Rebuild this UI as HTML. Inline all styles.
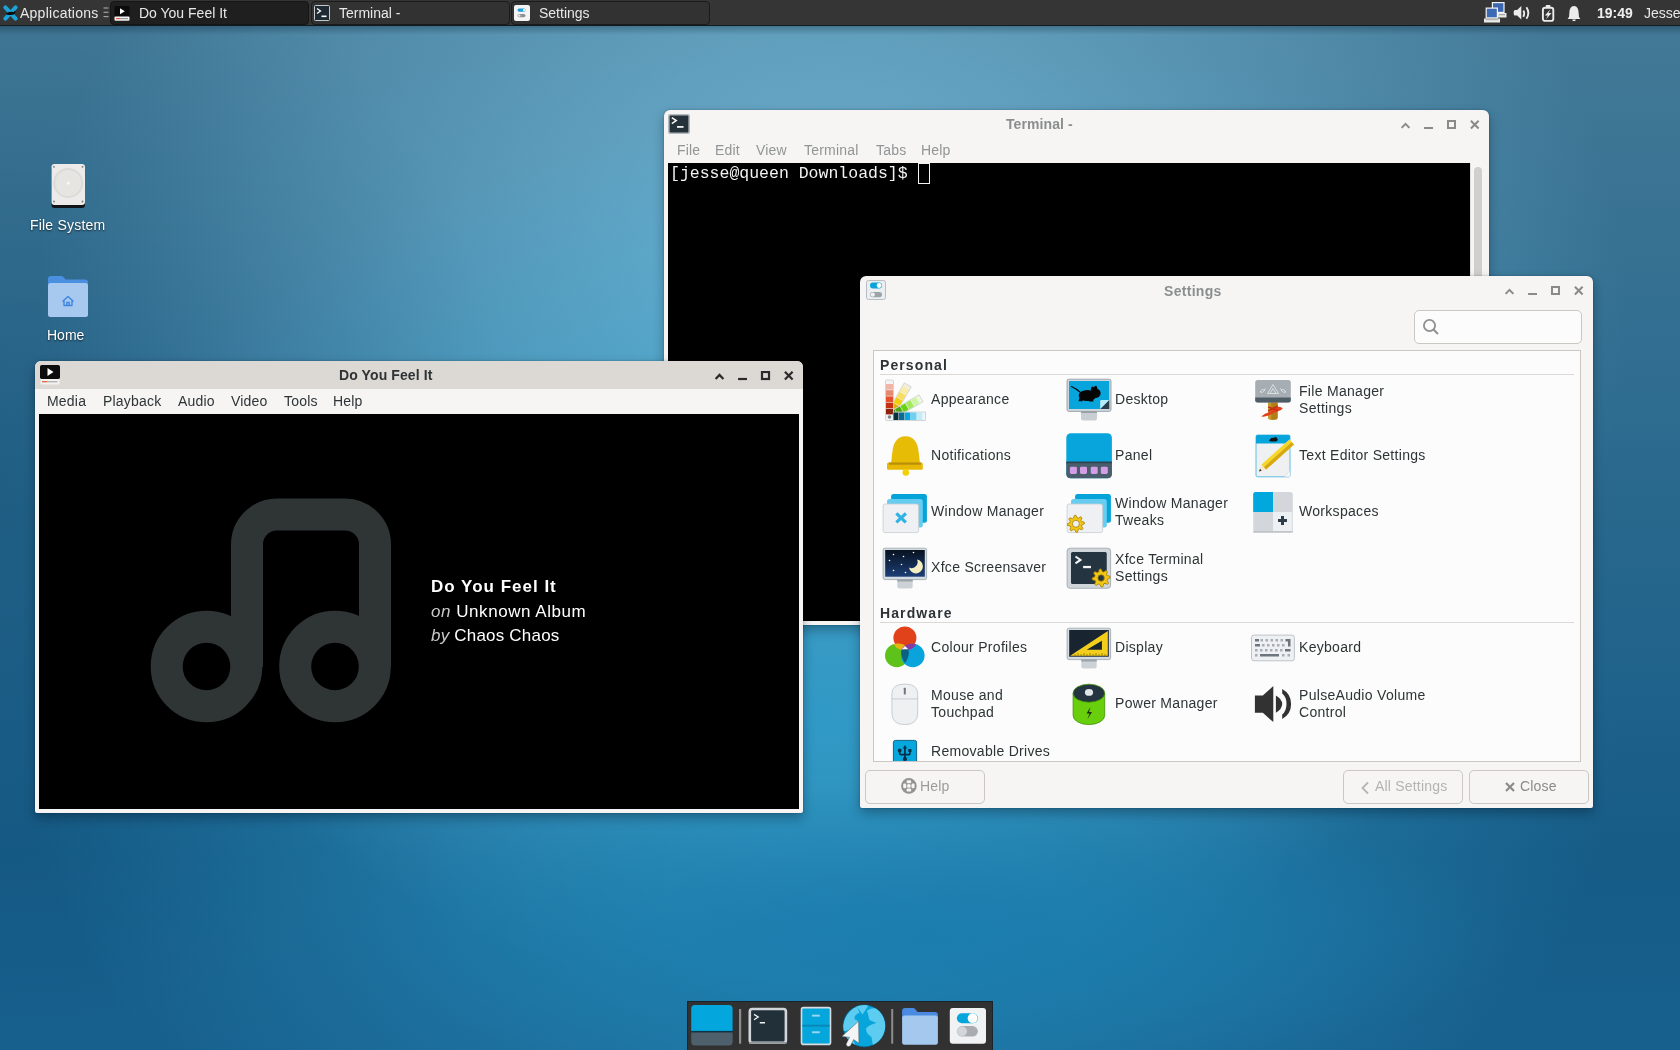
<!DOCTYPE html>
<html><head><meta charset="utf-8">
<style>
*{margin:0;padding:0;box-sizing:border-box}
html,body{width:1680px;height:1050px;overflow:hidden}
body{position:relative;font-family:"Liberation Sans",sans-serif;font-size:14px;color:#2e3436;
background:
 radial-gradient(ellipse 513px 570px at 0px 470px, rgba(0,59,99,0.234), rgba(0,59,99,0) 100%),
 radial-gradient(ellipse 586px 150px at 925px 936px, rgba(26,125,174,0.962), rgba(26,125,174,0) 100%),
 radial-gradient(ellipse 798px 611px at 820px 723px, rgba(45,159,205,0.801), rgba(45,159,205,0) 100%),
 radial-gradient(ellipse 796px 687px at 831px 320px, rgba(133,204,234,0.784), rgba(133,204,234,0) 100%),
 linear-gradient(180deg, #447a97 0px, #165c87 853px, #175f8d 1050px);}
.abs{position:absolute}
.t{position:absolute;white-space:pre;line-height:1;will-change:transform}
/* panel */
#panel{position:absolute;left:0;top:0;width:1680px;height:26px;background:#353535;border-bottom:1px solid #0f1a22;z-index:5}
#pshadow{position:absolute;left:0;top:26px;width:1680px;height:9px;background:linear-gradient(180deg,rgba(0,15,30,0.28),rgba(0,15,30,0))}
.task{position:absolute;top:1px;height:24px;width:199px;border-radius:4px;background:#323232;border:1px solid #1b1b1b}
.task.act{background:#1f1f1f;border-color:#151515}
.ptxt{color:#e8e8e8;font-size:14px}
/* windows */
.win{position:absolute;border-radius:6px 6px 2px 2px;background:#f6f5f4;box-shadow:0 5px 12px rgba(0,10,25,0.32),0 0 2px rgba(0,0,0,0.3)}
.title{position:absolute;left:0;right:0;top:0;font-weight:bold;font-size:14px;text-align:center;white-space:pre}
.menu{position:absolute;white-space:pre;font-size:14px}
.desk-label{color:#fff;text-shadow:0 1px 2px rgba(0,0,0,0.7);font-size:14px}
.item{position:absolute;font-size:14px;color:#2e3436;white-space:pre;line-height:17px}
.hdr{position:absolute;font-weight:bold;font-size:14px;color:#2e3436;white-space:pre;line-height:1}
.btn{position:absolute;border:1px solid #cbc7c3;border-radius:5px;background:#f6f5f4}
.itm{color:#2e3436;letter-spacing:0.3px}
.itm2{position:absolute;white-space:pre;line-height:17px;color:#2e3436;letter-spacing:0.3px;will-change:transform}
.hdr{font-weight:bold;color:#2e3436;letter-spacing:1.1px}
</style></head>
<body>

<!-- ============ TOP PANEL ============ -->
<div id="pshadow"></div>
<div id="panel">
  <!-- xfce logo -->
  <svg class="abs" style="left:3px;top:5px" width="15" height="16" viewBox="0 0 15 16">
    <g stroke="#1ba3d9" stroke-width="4" stroke-linecap="round"><line x1="2.4" y1="2.4" x2="12.6" y2="13.6"/><line x1="12.6" y1="2.4" x2="2.4" y2="13.6"/></g>
    <path d="M3 9.2 C4.5 6.8 8 6.4 10.5 7.2 L11.6 6 L12.6 6.4 L12 8.4 C10.5 10.2 6 10.6 3 9.2Z" fill="#0d0d0d"/>
  </svg>
  <div class="t ptxt" style="left:20px;top:6px;letter-spacing:0.25px">Applications</div>
  <svg class="abs" style="left:103px;top:7px" width="6" height="11" viewBox="0 0 6 11"><g stroke="#a8a8a8" stroke-width="1.1"><line x1="0.5" y1="1" x2="5.5" y2="1"/><line x1="0.5" y1="5.3" x2="5.5" y2="5.3"/><line x1="0.5" y1="9.6" x2="5.5" y2="9.6"/></g></svg>

  <div class="task act" style="left:110px"></div>
  <svg class="abs" style="left:114px;top:6px" width="16" height="15" viewBox="0 0 16 15">
    <rect x="0.5" y="0" width="15" height="10.5" rx="1.5" fill="#0b0b0b"/>
    <path d="M6 2.2 L10.8 5.2 L6 8.2Z" fill="#fff"/>
    <rect x="0.5" y="10.5" width="15" height="4.3" rx="1" fill="#f2f2f2"/>
    <rect x="2" y="12" width="4" height="1.2" fill="#e2553a"/><rect x="6" y="12" width="8" height="1.2" fill="#9a9a9a"/>
  </svg>
  <div class="t ptxt" style="left:139px;top:6px">Do You Feel It</div>

  <div class="task" style="left:311px"></div>
  <svg class="abs" style="left:314px;top:5px" width="16" height="16" viewBox="0 0 16 16">
    <rect x="0.5" y="0.5" width="15" height="15" rx="1" fill="#1f2b33" stroke="#c5c9cc" stroke-width="1"/>
    <path d="M3 3.5 L6.5 6 L3 8.5" fill="none" stroke="#fff" stroke-width="1.3"/>
    <rect x="7.5" y="10.5" width="5" height="1.6" fill="#fff"/>
  </svg>
  <div class="t ptxt" style="left:339px;top:6px">Terminal -</div>

  <div class="task" style="left:511px"></div>
  <svg class="abs" style="left:514px;top:5px" width="16" height="16" viewBox="0 0 16 16">
    <rect x="0" y="0" width="16" height="16" rx="2" fill="#f4f4f4"/>
    <rect x="3.5" y="3.5" width="8" height="3.2" rx="1.6" fill="#1aa0da"/><circle cx="10" cy="5.1" r="1.2" fill="#fff"/>
    <rect x="3.5" y="9" width="8" height="3.2" rx="1.6" fill="#8e9396"/><circle cx="5.2" cy="10.6" r="1.2" fill="#e8e8e8"/>
  </svg>
  <div class="t ptxt" style="left:539px;top:6px">Settings</div>

  <!-- tray -->
  <svg class="abs" style="left:1483px;top:1px" width="25" height="23" viewBox="1483 1 25 23">
    <rect x="1498" y="13" width="8.5" height="4.5" fill="#e8e8e4"/><rect x="1499" y="14.2" width="6" height="1" fill="#9a9a9a"/>
    <rect x="1491.8" y="2" width="12.8" height="11.2" fill="#f4f4f4"/><rect x="1493" y="3.2" width="10.4" height="8.6" fill="#3a67b0"/>
    <rect x="1484" y="18.5" width="16" height="4" fill="#ebebe7"/><rect x="1485.5" y="19.2" width="13" height="1" fill="#a8a8a8"/>
    <rect x="1485.6" y="7.5" width="12.4" height="11" fill="#f4f4f4"/><rect x="1486.8" y="8.7" width="10" height="8.6" fill="#3d6ab5"/>
  </svg>
  <svg class="abs" style="left:1513px;top:5px" width="18" height="15" viewBox="0 0 18 15">
    <path d="M8.3 0.9 V14.6 L4.2 10.6 H2.2 Q0.7 10.6 0.7 9.1 V6.4 Q0.7 4.9 2.2 4.9 H4.2Z" fill="#ececec"/>
    <path d="M10.3 5.6 Q12.1 7.75 10.3 11.9" fill="none" stroke="#ececec" stroke-width="1.9"/>
    <path d="M13.4 2.2 Q17.3 7.75 13.4 13.8" fill="none" stroke="#ececec" stroke-width="1.9"/>
  </svg>
  <svg class="abs" style="left:1541px;top:4px" width="14" height="18" viewBox="0 0 14 18">
    <rect x="4.8" y="0.9" width="4.6" height="2.8" rx="0.8" fill="#ececec"/>
    <rect x="1.9" y="3.7" width="10.4" height="13.2" rx="2.2" fill="none" stroke="#ececec" stroke-width="1.9"/>
    <path d="M9.4 5.2 L3.9 11.6 H6.8 L4.9 15.6 L10.5 9.1 H7.5Z" fill="#ececec"/>
  </svg>
  <svg class="abs" style="left:1567px;top:5px" width="14" height="17" viewBox="0 0 14 17">
    <path d="M7 1 C10.3 1 11.4 4 11.6 7.5 L12 12 L13.4 14 H0.6 L2 12 L2.4 7.5 C2.6 4 3.7 1 7 1Z" fill="#ececec"/>
    <path d="M5.2 14.5 H8.8 Q8.8 16.2 7 16.2 Q5.2 16.2 5.2 14.5Z" fill="#ececec"/>
  </svg>
  <div class="t ptxt" style="left:1597px;top:6px;font-weight:bold;color:#eee">19:49</div>
  <div class="t ptxt" style="left:1644px;top:6px;color:#e8e8e8">Jesse</div>
</div>

<!-- ============ DESKTOP ICONS ============ -->
<svg class="abs" style="left:51px;top:164px" width="35" height="44" viewBox="0 0 35 44">
  <rect x="0.5" y="2" width="33.5" height="42" rx="3" fill="#101418"/>
  <rect x="0.5" y="0" width="33.5" height="41" rx="3" fill="#ecebea"/>
  <circle cx="17.2" cy="19" r="15" fill="#dcdbd8"/>
  <circle cx="17.2" cy="19" r="13" fill="#e6e5e2"/>
  <circle cx="17.2" cy="19" r="1.6" fill="#f8f8f8"/>
  <circle cx="3" cy="2.8" r="0.9" fill="#777"/><circle cx="31.5" cy="2.8" r="0.9" fill="#777"/>
  <circle cx="3" cy="37.5" r="0.9" fill="#777"/><circle cx="31.5" cy="37.5" r="0.9" fill="#777"/>
</svg>
<div class="t desk-label" style="left:30px;top:218px;letter-spacing:0.2px">File System</div>
<svg class="abs" style="left:48px;top:276px" width="40" height="41" viewBox="0 0 40 41">
  <path d="M0 3 Q0 0 3 0 H13 Q15 0 16.5 2 L17.5 3.5 H37 Q40 3.5 40 6.5 V12 H0Z" fill="#4a8fe0"/>
  <rect x="0" y="7" width="40" height="34" rx="2.5" fill="#a8c9ef"/>
  <path d="M14.5 25.5 L20 20.5 L25.5 25.5 M16 24.5 V29.5 H24 V24.5 M18.8 29.5 V26.5 H21.2 V29.5" fill="none" stroke="#3d86e0" stroke-width="1.4" stroke-linejoin="round"/>
</svg>
<div class="t desk-label" style="left:47px;top:328px">Home</div>

<!-- ============ TERMINAL WINDOW ============ -->
<div class="win" id="term" style="left:664px;top:110px;width:825px;height:515px;">
  <svg class="abs" style="left:4px;top:4px" width="22" height="20" viewBox="0 0 22 20">
    <rect x="0" y="0" width="22" height="20" rx="2" fill="#b3b9bd"/><rect x="1.6" y="1.6" width="18.8" height="16.8" rx="1" fill="#26323a"/>
    <path d="M3.8 3.6 L8.2 6.6 L3.8 9.6" fill="none" stroke="#f4f4f4" stroke-width="1.6"/>
    <rect x="9" y="12" width="6.5" height="1.8" fill="#f4f4f4"/>
  </svg>
  <div class="t" style="left:342px;top:7px;font-weight:bold;color:#8b8e8f;letter-spacing:0.1px">Terminal -</div>
  <svg class="abs" style="left:735px;top:10px" width="82" height="12" viewBox="0 0 82 12">
    <g fill="none" stroke="#8a8a8a" stroke-width="2">
      <path d="M2.6 7.9 L6.5 3.9 L10.4 7.9"/>
      <path d="M25.1 8 H34"/>
      <rect x="49" y="1" width="7" height="7"/>
      <path d="M71.9 0.8 L79.6 8.5 M79.6 0.8 L71.9 8.5"/>
    </g>
  </svg>
  <div class="t" style="left:13px;top:33px;color:#929595;letter-spacing:0.2px">File</div>
  <div class="t" style="left:51px;top:33px;color:#929595;letter-spacing:0.2px">Edit</div>
  <div class="t" style="left:92px;top:33px;color:#929595;letter-spacing:0.2px">View</div>
  <div class="t" style="left:140px;top:33px;color:#929595;letter-spacing:0.2px">Terminal</div>
  <div class="t" style="left:212px;top:33px;color:#929595;letter-spacing:0.2px">Tabs</div>
  <div class="t" style="left:257px;top:33px;color:#929595;letter-spacing:0.2px">Help</div>
  <div class="abs" style="left:4px;top:53px;width:802px;height:458px;background:#000"></div>
  <div class="t" style="left:6px;top:56px;font-family:'Liberation Mono',monospace;font-size:16.5px;color:#f2f2f2">[jesse@queen Downloads]$ </div>
  <div class="abs" style="left:254px;top:53px;width:12px;height:21px;border:1px solid #f2f2f2"></div>
  <div class="abs" style="left:806px;top:53px;width:15px;height:458px;background:#f6f5f4;border-left:1px solid #e0dedb"></div>
  <div class="abs" style="left:810px;top:57px;width:8px;height:460px;background:#cfcfcf;border-radius:4px"></div>
</div>

<!-- ============ MEDIA PLAYER ============ -->
<div class="win" id="media" style="left:35px;top:361px;width:768px;height:452px;">
  <div class="abs" style="left:0;top:0;width:768px;height:28px;background:#dcd8d4;border-radius:6px 6px 0 0"></div>
  <svg class="abs" style="left:5px;top:4px" width="20" height="20" viewBox="0 0 20 20">
    <rect x="0" y="0" width="20" height="14" rx="1.8" fill="#0c0c0c"/>
    <path d="M7.5 3 L13.5 7 L7.5 11Z" fill="#fff"/>
    <rect x="0.5" y="14" width="19" height="5.5" rx="1" fill="#f4f2f0"/>
    <rect x="2" y="16" width="5" height="1.4" fill="#e86d50"/><rect x="7" y="16" width="10.5" height="1.4" fill="#b5b5b5"/>
  </svg>
  <div class="t" style="left:304px;top:7px;font-weight:bold;font-size:14px;color:#2e3436;letter-spacing:0.1px">Do You Feel It</div>
  <svg class="abs" style="left:678px;top:10px" width="82" height="12" viewBox="0 0 82 12">
    <g fill="none" stroke="#2a2a2a" stroke-width="2.2">
      <path d="M2.6 7.9 L6.5 3.9 L10.4 7.9"/>
      <path d="M25.1 8 H34"/>
      <rect x="49" y="1" width="7" height="7"/>
      <path d="M71.9 0.8 L79.6 8.5 M79.6 0.8 L71.9 8.5"/>
    </g>
  </svg>
  <div class="abs" style="left:0;top:28px;width:768px;height:25px;background:#f6f5f4"></div>
  <div class="t" style="left:12px;top:33px;color:#2e3436;letter-spacing:0.2px">Media</div>
  <div class="t" style="left:68px;top:33px;color:#2e3436;letter-spacing:0.2px">Playback</div>
  <div class="t" style="left:143px;top:33px;color:#2e3436;letter-spacing:0.2px">Audio</div>
  <div class="t" style="left:196px;top:33px;color:#2e3436;letter-spacing:0.2px">Video</div>
  <div class="t" style="left:249px;top:33px;color:#2e3436;letter-spacing:0.2px">Tools</div>
  <div class="t" style="left:298px;top:33px;color:#2e3436;letter-spacing:0.2px">Help</div>
  <div class="abs" style="left:4px;top:53px;width:760px;height:395px;background:#000;overflow:hidden">
    <svg class="abs" style="left:0;top:0" width="760" height="395" viewBox="39 414 760 395">
      <g fill="none" stroke="#2f3435" stroke-width="32">
        <circle cx="206.5" cy="666.5" r="39.8"/>
        <circle cx="335" cy="666.5" r="39.8"/>
        <path d="M247 667 V544.5 A30 30 0 0 1 277 514.5 H345 A30 30 0 0 1 375 544.5 V667"/>
      </g>
    </svg>
    <div class="t" style="left:392px;top:164px;font-weight:bold;font-size:17px;letter-spacing:1px;color:#fff">Do You Feel It</div>
    <div class="t" style="left:392px;top:189px;font-size:17px;letter-spacing:0.55px;color:#fff"><i style="color:#c8c8c8">on</i> Unknown Album</div>
    <div class="t" style="left:392px;top:213px;font-size:17px;letter-spacing:0.2px;color:#fff"><i style="color:#c8c8c8">by</i> Chaos Chaos</div>
  </div>
</div>

<!-- ============ SETTINGS ============ -->
<div class="win" id="settings" style="left:860px;top:276px;width:733px;height:532px;">
  <svg class="abs" style="left:6px;top:4px" width="20" height="20" viewBox="0 0 20 20">
    <rect x="0.5" y="0.5" width="19" height="19" rx="2" fill="#eceff1" stroke="#b7bec4" stroke-width="1"/>
    <rect x="4" y="2.6" width="12" height="5.8" rx="2.9" fill="#0aa4dc"/><circle cx="13.1" cy="5.5" r="2.4" fill="#fff"/>
    <rect x="4" y="12" width="12" height="5.2" rx="2.6" fill="#9aa3a6"/><circle cx="6.7" cy="14.6" r="2.2" fill="#eef0f1"/>
  </svg>
  <div class="t" style="left:304px;top:8px;font-weight:bold;color:#8b8e8f;letter-spacing:0.3px">Settings</div>
  <svg class="abs" style="left:643px;top:10px" width="82" height="12" viewBox="0 0 82 12">
    <g fill="none" stroke="#8a8a8a" stroke-width="2">
      <path d="M2.6 7.9 L6.5 3.9 L10.4 7.9"/>
      <path d="M25.1 8 H34"/>
      <rect x="49" y="1" width="7" height="7"/>
      <path d="M71.9 0.8 L79.6 8.5 M79.6 0.8 L71.9 8.5"/>
    </g>
  </svg>
  <div class="abs" style="left:554px;top:34px;width:168px;height:34px;background:#fcfcfc;border:1px solid #cbc7c3;border-radius:5px"></div>
  <svg class="abs" style="left:562px;top:42px" width="18" height="18" viewBox="0 0 18 18">
    <circle cx="7.5" cy="7.5" r="5.6" fill="none" stroke="#8f8f8f" stroke-width="1.8"/><path d="M11.5 11.5 L16 16" stroke="#8f8f8f" stroke-width="2"/>
  </svg>
  <div class="abs" style="left:13px;top:74px;width:708px;height:412px;background:#fcfcfc;border:1px solid #cbc7c3;overflow:hidden">
    <div class="t hdr" style="left:6px;top:7px">Personal</div>
    <div class="abs" style="left:6px;top:23px;width:694px;height:1px;background:#dcd8d5"></div>
    <div class="t hdr" style="left:6px;top:255px">Hardware</div>
    <div class="abs" style="left:6px;top:271px;width:694px;height:1px;background:#dcd8d5"></div>
    <svg class="abs" style="left:7px;top:25px" width="48" height="48" viewBox="0 0 48 48"><g transform="rotate(30 8.5 40.5)"><rect x="4.5" y="4" width="8" height="37" fill="#f3efd8" stroke="#cfd2d6" stroke-width="0.8"/>
<rect x="5" y="8" width="7" height="5.6" fill="#f9eca5"/><rect x="5" y="14.2" width="7" height="5.6" fill="#f7de62"/>
<rect x="5" y="20.4" width="7" height="5.6" fill="#f1ce0a"/><rect x="5" y="26.6" width="7" height="5.6" fill="#e3ad0a"/><rect x="5" y="32.8" width="7" height="8" fill="#c98112"/></g>
<g transform="rotate(60 8.5 40.5)"><rect x="4.5" y="4" width="8" height="37" fill="#eef8de" stroke="#cfd2d6" stroke-width="0.8"/>
<rect x="5" y="8" width="7" height="5.6" fill="#cdf5a3"/><rect x="5" y="14.2" width="7" height="5.6" fill="#a4ea5e"/>
<rect x="5" y="20.4" width="7" height="5.6" fill="#6cd018"/><rect x="5" y="26.6" width="7" height="5.6" fill="#4aa512"/><rect x="5" y="32.8" width="7" height="8" fill="#2f7a10"/></g>
<rect x="4.5" y="4" width="8" height="40.5" rx="1" fill="#f4f4f4" stroke="#c9cdd1" stroke-width="0.8"/>
<rect x="5" y="8" width="7" height="5.6" fill="#f0b5a6"/><rect x="5" y="14.2" width="7" height="5.6" fill="#e58a70"/>
<rect x="5" y="20.4" width="7" height="5.6" fill="#e3502b"/><rect x="5" y="26.6" width="7" height="5.6" fill="#c42f12"/>
<rect x="5" y="32.8" width="7" height="5.6" fill="#8c220d"/>
<circle cx="8.5" cy="41" r="1.8" fill="#7b8791"/>
<rect x="12.3" y="36" width="32.2" height="8.5" fill="#eef6fb" stroke="#c9cdd1" stroke-width="0.8"/>
<rect x="12.5" y="36.5" width="5" height="7.5" fill="#07303f"/><rect x="18" y="36.5" width="5.5" height="7.5" fill="#0a6c96"/>
<rect x="24" y="36.5" width="5.5" height="7.5" fill="#08a7de"/><rect x="30" y="36.5" width="5.5" height="7.5" fill="#6fd0f0"/><rect x="36" y="36.5" width="5.5" height="7.5" fill="#c4ebf8"/></svg>
    <div class="t itm" style="left:57px;top:41.15px">Appearance</div>
    <svg class="abs" style="left:191px;top:25px" width="48" height="48" viewBox="0 0 48 48"><rect x="16" y="34" width="16" height="10.6" rx="2" fill="#c9ced3"/><rect x="16" y="34" width="16" height="3" fill="#9aa2a9"/>
<rect x="2" y="3.2" width="44" height="32.2" rx="1.8" fill="#cfd6dc" stroke="#8e979e" stroke-width="0.8"/>
<rect x="4" y="5" width="40.2" height="28" fill="#08a5dc"/>
<path d="M6 10.3 Q11 12.5 16 16.8" fill="none" stroke="#050505" stroke-width="1.1"/>
<ellipse cx="22.5" cy="19.5" rx="8.8" ry="5.6" fill="#050505"/><circle cx="31" cy="17.3" r="4.6" fill="#050505"/>
<ellipse cx="27.6" cy="13.2" rx="1.7" ry="2.6" fill="#050505"/><ellipse cx="30.6" cy="12.4" rx="1.7" ry="2.6" fill="#050505"/>
<path d="M14.5 22 L13.5 25.2 H17.5 L18 23Z M24 23.5 L24 25.5 H28.5 L28 23Z" fill="#050505"/>
<path d="M44.2 24 V33 H35.2Z" fill="#2d3e4b"/><path d="M35.2 33 L44.2 24 H36.5 Q35.2 24 35.2 25.3Z" fill="#b9ecfb"/></svg>
    <div class="t itm" style="left:241px;top:41.15px">Desktop</div>
    <svg class="abs" style="left:375px;top:25px" width="48" height="48" viewBox="0 0 48 48"><path d="M19.2 25 H28.8 V41.5 Q28.8 44 24 44 Q19.2 44 19.2 41.5Z" fill="#b07f18"/><rect x="19.2" y="25" width="3" height="18" fill="#c79a2e"/>
<path d="M12.3 40.5 Q16 37 19.5 36.5 L28.5 31 Q31 30 33.8 32.2 Q32 35 28.5 35.5 L19.5 39.5 Q16 41 12.3 40.5Z" fill="#e2401c"/>
<path d="M19.2 31 L28.8 34.5 M19.2 35 L28.8 30" stroke="#c7300f" stroke-width="1.6"/>
<rect x="6.2" y="4.1" width="35.6" height="22.4" rx="2.5" fill="#a6aeb4"/>
<path d="M6.2 21.5 H41.8 V24 Q41.8 26.5 39.3 26.5 H8.7 Q6.2 26.5 6.2 24Z" fill="#4f5d67"/>
<g fill="none" stroke="#dfe3e6" stroke-width="0.9"><path d="M18.5 17.5 L24 8.5 L29.5 17.5Z M21 17.5 L24 12.5 L27 17.5"/><path d="M11 16 Q13 12 16 14 Q14 17.5 11 16Z M15.5 13.5 L17 12.5"/><path d="M37 16 Q35 12 32 14 Q34 17.5 37 16Z M32.5 13.5 L31 12.5"/></g></svg>
    <div class="itm2" style="left:425px;top:31.85px">File Manager<br>Settings</div>
    <svg class="abs" style="left:7px;top:81px" width="48" height="48" viewBox="0 0 48 48"><path d="M24.5 4.2 C33 4.2 36.5 11 37.5 19 L39 31.4 H10 L11.5 19 C12.5 11 16 4.2 24.5 4.2Z" fill="#e6bc06"/>
<rect x="6" y="30.5" width="35.8" height="7.2" rx="1.5" fill="#e8b904"/><rect x="8" y="30.5" width="32" height="2.2" fill="#b98e0a"/>
<circle cx="24.8" cy="40.5" r="3.3" fill="#f3d100"/></svg>
    <div class="t itm" style="left:57px;top:97.15px">Notifications</div>
    <svg class="abs" style="left:191px;top:81px" width="48" height="48" viewBox="0 0 48 48"><rect x="1.3" y="1.3" width="45.6" height="45" rx="4.5" fill="#08a5dc"/>
<path d="M1.3 30.5 H46.9 V41.8 Q46.9 46.3 42.4 46.3 H5.8 Q1.3 46.3 1.3 41.8Z" fill="#4a5d6c"/>
<rect x="1.3" y="29.5" width="45.6" height="1.8" fill="#2f4453"/>
<rect x="4.9" y="34.7" width="7" height="7.3" rx="1.4" fill="#d49ee6"/><rect x="15" y="34.7" width="7" height="7.3" rx="1.4" fill="#d49ee6"/>
<rect x="25.7" y="34.7" width="7" height="7.3" rx="1.4" fill="#d49ee6"/><rect x="35.8" y="34.7" width="7" height="7.3" rx="1.4" fill="#d49ee6"/></svg>
    <div class="t itm" style="left:241px;top:97.15px">Panel</div>
    <svg class="abs" style="left:375px;top:81px" width="48" height="48" viewBox="0 0 48 48"><rect x="7" y="3" width="34" height="41.8" rx="1.5" fill="#eef0f2" stroke="#3ab0dc" stroke-width="0.8"/>
<path d="M8.5 3 H39.5 Q41 3 41 4.5 V11.5 H7 V4.5 Q7 3 8.5 3Z" fill="#08a5dc"/>
<path d="M20 8.5 Q21 5.5 25 5.8 L27 4.8 L28 6.2 Q29.5 7.5 28 9 L26.5 9.6 H21.5Z" fill="#111"/>
<path d="M41 38.5 L35.5 44.8 H41Z" fill="#fbfbfb" stroke="#cfd3d6" stroke-width="0.6"/>
<g transform="translate(10 39.4) rotate(-41.8)"><path d="M0 0 L6.5 -3.4 H44 V3.4 H6.5Z" fill="#f3e7c4"/>
<rect x="6.5" y="-3.4" width="37.5" height="3.4" fill="#f6d626"/><rect x="6.5" y="0" width="37.5" height="3.4" fill="#d8a90c"/>
<path d="M0 0 L2.4 -1.25 V1.25Z" fill="#2a2a2a"/></g></svg>
    <div class="t itm" style="left:425px;top:97.15px">Text Editor Settings</div>
    <svg class="abs" style="left:7px;top:137px" width="48" height="48" viewBox="0 0 48 48"><rect x="10.1" y="6" width="35.8" height="28.8" rx="2.5" fill="#04a3d8"/>
<rect x="6" y="10.9" width="35.8" height="28.5" rx="2.5" fill="#66cdf1"/>
<rect x="2.1" y="16" width="35.5" height="28.6" rx="2" fill="#eef0f3" stroke="#c6cbd0" stroke-width="0.8"/>
<path d="M16.5 26.5 L23.7 33.3 M23.7 26.5 L16.5 33.3" stroke="#2fb3e4" stroke-width="3.2" stroke-linecap="square"/></svg>
    <div class="t itm" style="left:57px;top:153.15px">Window Manager</div>
    <svg class="abs" style="left:191px;top:137px" width="48" height="48" viewBox="0 0 48 48"><rect x="10.1" y="6" width="35.8" height="28.8" rx="2.5" fill="#04a3d8"/>
<rect x="6" y="10.9" width="35.8" height="28.5" rx="2.5" fill="#66cdf1"/>
<rect x="2.1" y="16" width="35.5" height="28.6" rx="2" fill="#eef0f3" stroke="#c6cbd0" stroke-width="0.8"/>
<polygon points="19.24,34.14 19.40,35.80 16.90,36.99 16.55,38.14 17.97,40.52 16.91,41.81 14.30,40.89 13.24,41.45 12.56,44.14 10.90,44.30 9.71,41.80 8.56,41.45 6.18,42.87 4.89,41.81 5.81,39.20 5.25,38.14 2.56,37.46 2.40,35.80 4.90,34.61 5.25,33.46 3.83,31.08 4.89,29.79 7.50,30.71 8.56,30.15 9.24,27.46 10.90,27.30 12.09,29.80 13.24,30.15 15.62,28.73 16.91,29.79 15.99,32.40 16.55,33.46" fill="#f2c713" stroke="#a57d08" stroke-width="0.8" stroke-linejoin="round"/><circle cx="10.9" cy="35.8" r="3.5" fill="#eef0f3" stroke="#a57d08" stroke-width="0.8"/></svg>
    <div class="itm2" style="left:241px;top:143.85px">Window Manager<br>Tweaks</div>
    <svg class="abs" style="left:375px;top:137px" width="48" height="48" viewBox="0 0 48 48"><rect x="4.2" y="3.9" width="39.6" height="40.7" rx="2.5" fill="#d3d7db"/>
<path d="M4.2 24 V6.4 Q4.2 3.9 6.7 3.9 H24 V24Z" fill="#02a7dd"/>
<rect x="24" y="24" width="18.8" height="19.6" fill="#eef1f4"/>
<path d="M33.5 28 V37 M29 32.5 H38" stroke="#2d3e4b" stroke-width="3"/>
<rect x="4.2" y="43.2" width="39.6" height="1.4" fill="#b9bec3"/></svg>
    <div class="t itm" style="left:425px;top:153.15px">Workspaces</div>
    <svg class="abs" style="left:7px;top:193px" width="48" height="48" viewBox="0 0 48 48"><rect x="16.3" y="34.5" width="15.4" height="10.1" rx="2" fill="#cdd2d7"/><rect x="16.3" y="34.5" width="15.4" height="3" fill="#9ba3aa"/>
<rect x="2.1" y="4.2" width="43.5" height="31.4" rx="1.8" fill="#d4dbe1" stroke="#9aa3aa" stroke-width="0.8"/>

<defs><linearGradient id="ss" x1="0" y1="0" x2="0" y2="1"><stop offset="0" stop-color="#08121f"/><stop offset="1" stop-color="#1d3f78"/></linearGradient></defs>
<rect x="4.2" y="6" width="39.6" height="26.7" fill="url(#ss)"/>
<g fill="#fff"><circle cx="12.5" cy="10.5" r="0.8"/><circle cx="22.5" cy="12.5" r="0.8"/><circle cx="32.5" cy="8.5" r="0.8"/><circle cx="8.5" cy="16.5" r="0.8"/><circle cx="20.5" cy="20.5" r="0.8"/><circle cx="12.5" cy="26.5" r="0.8"/><circle cx="24.5" cy="28.5" r="0.8"/></g>
<path d="M36 15.5 A7 7 0 1 1 28 23.5 A6 6 0 0 0 36 15.5Z" fill="#f2eec2"/></svg>
    <div class="t itm" style="left:57px;top:209.15px">Xfce Screensaver</div>
    <svg class="abs" style="left:191px;top:193px" width="48" height="48" viewBox="0 0 48 48"><rect x="2.1" y="4.2" width="43.5" height="40.1" rx="3" fill="#cfd5da" stroke="#9aa2a8" stroke-width="0.8"/>
<rect x="6" y="8" width="35.75" height="31.9" rx="1.5" fill="#243440"/>
<path d="M10.5 12.5 L15.5 15.9 L10.5 19.3" fill="none" stroke="#f4f4f4" stroke-width="2"/>
<rect x="18.1" y="21.9" width="7.9" height="2.3" fill="#f4f4f4"/>
<polygon points="44.93,32.24 45.10,34.00 42.46,35.26 42.09,36.48 43.58,39.00 42.46,40.36 39.70,39.39 38.58,39.99 37.86,42.83 36.10,43.00 34.84,40.36 33.62,39.99 31.10,41.48 29.74,40.36 30.71,37.60 30.11,36.48 27.27,35.76 27.10,34.00 29.74,32.74 30.11,31.52 28.62,29.00 29.74,27.64 32.50,28.61 33.62,28.01 34.34,25.17 36.10,25.00 37.36,27.64 38.58,28.01 41.10,26.52 42.46,27.64 41.49,30.40 42.09,31.52" fill="#f2c713" stroke="#a57d08" stroke-width="0.8" stroke-linejoin="round"/><circle cx="36.1" cy="34" r="3.2" fill="#243440" stroke="#a57d08" stroke-width="0.8"/></svg>
    <div class="itm2" style="left:241px;top:199.85px">Xfce Terminal<br>Settings</div>
    <svg class="abs" style="left:7px;top:273px" width="48" height="48" viewBox="0 0 48 48"><circle cx="23.9" cy="14" r="11.5" fill="#e2421a"/>
<circle cx="15.8" cy="31.5" r="11.8" fill="#5ec21b" />
<circle cx="31.8" cy="31.5" r="11.8" fill="#0aa3dc"/>
<path d="M14.5 19.8 A11.8 11.8 0 0 1 27.5 25 A11.5 11.5 0 0 1 12.6 20.2Z" fill="#e8b414"/>
<path d="M35 21 A11.5 11.5 0 0 1 20.5 25 A11.8 11.8 0 0 1 35 20.6Z" fill="#8a3aa0"/>
<path d="M24 22 L27.5 25.5 L20.5 25.5Z" fill="#fafafa"/>
<path d="M20.5 25.5 H27.5 Q29 32 24 39 Q19 32 20.5 25.5Z" fill="#0b6280"/></svg>
    <div class="t itm" style="left:57px;top:289.15px">Colour Profiles</div>
    <svg class="abs" style="left:191px;top:273px" width="48" height="48" viewBox="0 0 48 48"><rect x="16.3" y="34.5" width="15.4" height="10.1" rx="2" fill="#cdd2d7"/><rect x="16.3" y="34.5" width="15.4" height="3" fill="#9ba3aa"/>
<rect x="2.1" y="4.2" width="43.5" height="31.4" rx="1.8" fill="#d4dbe1" stroke="#9aa3aa" stroke-width="0.8"/>

<rect x="4.2" y="6" width="39.6" height="26.7" fill="#18242f"/>
<path d="M5.2 31.7 L42.8 7 V31.7Z M21.7 25.8 H36.9 V16.8Z" fill="#f3cf1b" fill-rule="evenodd"/>
<g stroke="#8a6d05" stroke-width="0.8"><path d="M10 31.7 V30 M13 31.7 V29 M16 31.7 V30 M19 31.7 V29 M22 31.7 V30 M25 31.7 V29 M28 31.7 V30 M31 31.7 V29 M34 31.7 V30 M37 31.7 V29 M40 31.7 V30"/></g></svg>
    <div class="t itm" style="left:241px;top:289.15px">Display</div>
    <svg class="abs" style="left:375px;top:273px" width="48" height="48" viewBox="0 0 48 48"><rect x="2.5" y="11.1" width="42.9" height="25.7" rx="2.5" fill="#eef0f3" stroke="#b8bec4" stroke-width="0.9"/>
<g fill="#a6adb4">
<rect x="6" y="15" width="4" height="2.5" fill="#6d767e"/><rect x="11.5" y="15" width="2.5" height="2.5"/><rect x="16.5" y="15" width="2.5" height="2.5"/><rect x="21.5" y="15" width="2.5" height="2.5"/><rect x="26.5" y="15" width="2.5" height="2.5"/><rect x="31.5" y="15" width="2.5" height="2.5"/>
<path d="M36.5 15 H41.5 V22.5 H39 V17.5 H36.5Z" fill="#6d767e"/>
<rect x="6" y="20" width="5" height="2.5" fill="#6d767e"/><rect x="13" y="20" width="2.5" height="2.5"/><rect x="18" y="20" width="2.5" height="2.5"/><rect x="23" y="20" width="2.5" height="2.5"/><rect x="28" y="20" width="2.5" height="2.5"/><rect x="33" y="20" width="2.5" height="2.5"/>
<rect x="6" y="25" width="2.5" height="2.5"/><rect x="11" y="25" width="2.5" height="2.5"/><rect x="16" y="25" width="2.5" height="2.5"/><rect x="21" y="25" width="2.5" height="2.5"/><rect x="26" y="25" width="2.5" height="2.5"/><rect x="31" y="25" width="2.5" height="2.5"/><rect x="36" y="25" width="5.5" height="2.5" fill="#6d767e"/>
<rect x="6" y="30" width="2.5" height="2.5"/><rect x="11" y="30" width="19" height="2.5" fill="#6d767e"/><rect x="33" y="30" width="2.5" height="2.5"/><rect x="38.5" y="30" width="2.5" height="2.5"/>
</g></svg>
    <div class="t itm" style="left:425px;top:289.15px">Keyboard</div>
    <svg class="abs" style="left:7px;top:329px" width="48" height="48" viewBox="0 0 48 48"><path d="M10.9 14 Q10.9 4 23.8 4 Q36.7 4 36.7 14 V33 Q36.7 44.6 23.8 44.6 Q10.9 44.6 10.9 33Z" fill="#eef0f2" stroke="#c3c9ce" stroke-width="0.9"/>
<path d="M11 18.9 H36.6" stroke="#c3c9ce" stroke-width="0.9"/>
<rect x="22.8" y="7.7" width="2" height="6.9" rx="0.6" fill="#6f7880"/></svg>
    <div class="itm2" style="left:57px;top:335.85px">Mouse and<br>Touchpad</div>
    <svg class="abs" style="left:191px;top:329px" width="48" height="48" viewBox="0 0 48 48"><path d="M8.1 13.2 V35.4 A15.8 9.2 0 0 0 39.7 35.4 V13.2Z" fill="#69cf0d" stroke="#3f8f06" stroke-width="0.8"/>
<ellipse cx="23.9" cy="13.2" rx="15.8" ry="9" fill="#243440" stroke="#3f8f06" stroke-width="0.8"/>
<ellipse cx="24" cy="12.4" rx="4.1" ry="3.4" fill="#e1e4e6"/>
<path d="M25.5 27 L21.5 33.5 H24.5 L22.5 39 L27 32 H24Z" fill="#1e2e12"/></svg>
    <div class="t itm" style="left:241px;top:345.15px">Power Manager</div>
    <svg class="abs" style="left:375px;top:329px" width="48" height="48" viewBox="0 0 48 48"><path d="M5.9 15.4 H13.8 L24.3 6 V42.1 L13.8 32.7 H5.9Z" fill="#323232"/>
<path d="M26.9 15.4 Q33.2 19 33.2 24 Q33.2 29 26.9 32.7Z" fill="#323232"/>
<path d="M33.2 9.1 Q42.1 14 42.1 24 Q42.1 34 33.2 39 V34.5 Q37.5 31 37.5 24 Q37.5 17 33.2 13.6Z" fill="#323232"/></svg>
    <div class="itm2" style="left:425px;top:335.85px">PulseAudio Volume<br>Control</div>
    <svg class="abs" style="left:7px;top:385px" width="48" height="48" viewBox="0 0 48 48"><rect x="12.4" y="4.4" width="23.2" height="32" rx="2" fill="#05a7de" stroke="#07597a" stroke-width="0.9"/>
<g fill="none" stroke="#062f45" stroke-width="1.7"><path d="M23.9 11 V23"/><path d="M18.7 14.5 V17.5 Q18.7 18.7 20 18.7 H27.8 Q28.9 18.7 28.9 17.5 V14.5"/></g>
<path d="M21.8 12.6 L23.9 9 L26 12.6Z" fill="#062f45"/>
<circle cx="23.9" cy="23" r="2.1" fill="#062f45"/><circle cx="18.7" cy="14.5" r="1.9" fill="#062f45"/><rect x="27.3" y="12.9" width="3.2" height="3.2" rx="0.6" fill="#062f45"/></svg>
    <div class="t itm" style="left:57px;top:392.50px">Removable Drives</div>
  </div>
  <div class="btn" style="left:5px;top:494px;width:120px;height:34px"></div>
  <svg class="abs" style="left:41px;top:502px" width="16" height="16" viewBox="0 0 16 16">
    <circle cx="7.9" cy="7.9" r="7.8" fill="#939393"/>
    <g fill="#f6f5f4"><rect x="5.6" y="2.2" width="4.6" height="3.1" rx="1.2"/><rect x="5.6" y="10.5" width="4.6" height="3.1" rx="1.2"/>
    <rect x="2.2" y="5.6" width="3.1" height="4.6" rx="1.2"/><rect x="10.5" y="5.6" width="3.1" height="4.6" rx="1.2"/>
    <circle cx="7.9" cy="7.9" r="1.9"/></g>
  </svg>
  <div class="t" style="left:60px;top:503px;color:#9c9c9c;letter-spacing:0.2px">Help</div>
  <div class="btn" style="left:483px;top:494px;width:120px;height:34px"></div>
  <svg class="abs" style="left:500px;top:505px" width="10" height="14" viewBox="0 0 10 14"><path d="M8 1.5 L2.5 7 L8 12.5" fill="none" stroke="#b5b5b5" stroke-width="1.8"/></svg>
  <div class="t" style="left:515px;top:503px;color:#b3b3b3;letter-spacing:0.2px">All Settings</div>
  <div class="btn" style="left:609px;top:494px;width:120px;height:34px"></div>
  <svg class="abs" style="left:645px;top:506px" width="10" height="10" viewBox="0 0 10 10"><path d="M1 1 L9 9 M9 1 L1 9" stroke="#8a8a8a" stroke-width="2.2"/></svg>
  <div class="t" style="left:660px;top:503px;color:#8a8a8a;letter-spacing:0.2px">Close</div>
</div>

<!-- ============ DOCK ============ -->
<div class="abs" style="left:687px;top:1001px;width:306px;height:50px;background:#313131;border:1px solid #17242c"></div>
<svg class="abs" style="left:687px;top:1001px" width="306" height="49" viewBox="687 1001 306 49">
  <!-- show desktop / panel -->
  <path d="M691.2 1009 Q691.2 1005.1 695 1005.1 H728.8 Q732.6 1005.1 732.6 1009 V1031 H691.2Z" fill="#04a7dd"/>
  <rect x="691.2" y="1030.9" width="41.4" height="1.6" fill="#0b3446"/>
  <path d="M691.2 1032.5 H732.6 V1041.8 Q732.6 1045.6 728.8 1045.6 H695 Q691.2 1045.6 691.2 1041.8Z" fill="#4e606c"/>
  <rect x="739" y="1009" width="2.2" height="34.7" fill="#8d8d8d"/>
  <!-- terminal -->
  <rect x="749.8" y="1009" width="36.1" height="33.7" rx="2.5" fill="#22303a" stroke="#d2d6da" stroke-width="2.6"/>
  <rect x="749" y="1042" width="37.6" height="1.8" fill="#8f969c"/>
  <path d="M754 1014.4 L758.2 1017 L754 1019.7" fill="none" stroke="#f2f2f2" stroke-width="1.3"/>
  <rect x="759.8" y="1022" width="5.2" height="1.5" fill="#f2f2f2"/>
  <!-- cabinet -->
  <rect x="801.5" y="1007.6" width="29" height="36.8" rx="2" fill="#04a6dc" stroke="#d8dde2" stroke-width="1.6"/>
  <rect x="802.3" y="1024.7" width="27.4" height="1.9" fill="#0a86b8"/>
  <rect x="812.1" y="1014.7" width="7.7" height="1.9" fill="#9fd7ee"/><rect x="812.1" y="1031.3" width="7.7" height="1.9" fill="#9fd7ee"/>
  <!-- globe -->
  <defs><clipPath id="gclip"><circle cx="864.2" cy="1025.9" r="21"/></clipPath></defs>
  <circle cx="864.2" cy="1025.9" r="21" fill="#08a5dc" stroke="#07608a" stroke-width="0.8"/>
  <g fill="#5ccdf0" clip-path="url(#gclip)">
    <path d="M842 1031 Q844 1012 857 1006.5 L859.5 1013 Q853 1015 855 1019.5 L859 1021.5 L851 1030Z"/>
    <path d="M855 1004 Q862 1002.5 869 1004.5 L862.5 1014.5Z"/>
    <path d="M867 1010.5 Q876 1005 884 1013 Q888 1024 885 1034 Q880 1043 873 1046 L871.5 1037 Q866 1034 866 1028.5 Q869 1024.5 876.5 1023 L869.5 1020Z"/>
    <path d="M844 1033 L852 1038 L856 1046 Q848 1043 844 1036Z"/>
  </g>
  <path d="M858.6 1021.3 L858.9 1043.2 L853.6 1039.6 L850.6 1045.6 Q849 1047.4 847 1046 Q845.4 1044.8 846.6 1043 L849.6 1037.3 L841.8 1036.4Z" fill="#f4f4f4" stroke="#3a3a3a" stroke-width="0.4" stroke-linejoin="round"/>
  <rect x="891.2" y="1009" width="2" height="34.7" fill="#8d8d8d"/>
  <!-- folder -->
  <path d="M902.1 1011 Q902.1 1008 905 1008 H913 Q915 1008 916 1010 L917.5 1012 H935 Q937.9 1012 937.9 1015 V1020 H902.1Z" fill="#4a8ae0"/>
  <rect x="902.1" y="1015.6" width="35.8" height="29.1" rx="2.5" fill="#a5c8ef"/>
  <!-- settings -->
  <rect x="949.8" y="1008" width="36.2" height="35.7" rx="3" fill="#f1f2f3"/>
  <rect x="956.9" y="1013.2" width="21" height="10" rx="5" fill="#05a6dc"/><circle cx="972.6" cy="1018.2" r="4.9" fill="#fff"/>
  <rect x="956.9" y="1026.1" width="21" height="10.5" rx="5.25" fill="#a9adb1"/><circle cx="962.1" cy="1031.35" r="4.9" fill="#d3d6d9"/>
</svg>
</body></html>
